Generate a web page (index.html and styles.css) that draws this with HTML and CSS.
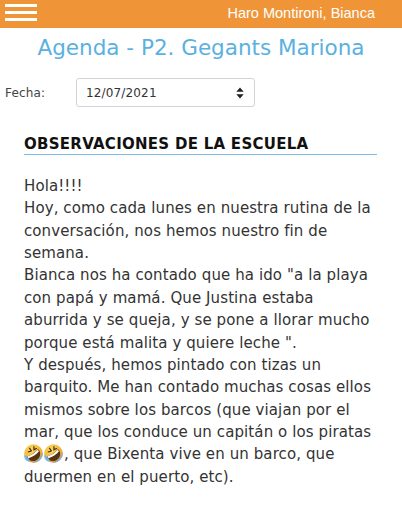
FILE: index.html
```html
<!DOCTYPE html>
<html lang="es">
<head>
<meta charset="utf-8">
<title>Agenda</title>
<link rel="stylesheet" href="styles.css">
</head>
<body>
<header class="topbar">
  <div class="burger"><span></span><span></span><span></span></div>
  <div class="user">Haro Montironi, Bianca</div>
</header>
<h1 class="title">Agenda - P2. Gegants Mariona</h1>
<div class="date-row">
  <label class="date-label">Fecha:</label>
  <div class="select">
    <span>12/07/2021</span>
    <svg class="updown" width="8" height="12" viewBox="0 0 8 12"><path d="M4 0.5 L7.7 4.8 H0.3 Z M4 11.5 L7.7 7.2 H0.3 Z" fill="#222"/></svg>
  </div>
</div>
<section class="obs">
  <h2 class="obs-title">OBSERVACIONES DE LA ESCUELA</h2>
  <p class="obs-text">Hola!!!!<br>Hoy, como cada lunes en nuestra rutina de la<br>conversación, nos hemos nuestro fin de<br>semana.<br>Bianca nos ha contado que ha ido "a la playa<br>con papá y mamá. Que Justina estaba<br>aburrida y se queja, y se pone a llorar mucho<br>porque está malita y quiere leche ".<br>Y después, hemos pintado con tizas un<br>barquito. Me han contado muchas cosas ellos<br>mismos sobre los barcos (que viajan por el<br>mar, que los conduce un capitán o los piratas<br><svg class="emoji" viewBox="0 0 18 18"><use href="#rofl"/></svg><svg class="emoji" viewBox="0 0 18 18"><use href="#rofl"/></svg>, que Bixenta vive en un barco, que<br>duermen en el puerto, etc).</p>
</section>
<svg class="defs" width="0" height="0">
  <defs>
    <radialGradient id="face" cx="40%" cy="30%" r="75%">
      <stop offset="0" stop-color="#fbdc5e"/>
      <stop offset=".65" stop-color="#f2b53a"/>
      <stop offset="1" stop-color="#d9862a"/>
    </radialGradient>
    <g id="rofl">
      <circle cx="9" cy="9" r="8.8" fill="url(#face)"/>
      <path d="M2.6 12.2 C6 11 11 8 13.2 4.8 C17.5 8.5 15 15 10 16 C6.5 16.6 3.8 15 2.6 12.2 Z" fill="#5a3312"/>
      <path d="M3.4 11.9 C7 10.6 10.8 8 13 5.4 L14.2 6.8 C12 9.6 8 12.2 4.2 13.5 Z" fill="#fff"/>
      <path d="M3.6 7.6 L7 6.8 M5 3.6 L7.2 6.8" stroke="#4a2b10" stroke-width="1.1" fill="none"/>
      <path d="M10.4 2.2 L10.4 5.4 L13.2 4" stroke="#4a2b10" stroke-width="1.1" fill="none" transform="translate(-1 0)"/>
      <path d="M0.4 10.5 C-0.2 13.6 1.6 16.4 4.6 16.8 C6 15.6 5 13.4 0.4 10.5 Z" fill="#74b6e6"/>
      <path d="M8 17.8 C11.5 18.2 15.8 16 17.4 11.4 C17.9 9.8 17.8 8.6 17.4 7.8 C16.5 12.4 13 16.4 8 17.8 Z" fill="#74b6e6"/>
    </g>
  </defs>
</svg>
</body>
</html>
```
FILE: styles.css
```css
* { box-sizing: border-box; }
html, body { margin: 0; padding: 0; }
body {
  width: 402px;
  height: 521px;
  overflow: hidden;
  background: #fff;
  font-family: "DejaVu Sans", Verdana, sans-serif;
  color: #222;
}
.topbar {
  height: 28px;
  background: #ef9538;
  display: flex;
  align-items: center;
  justify-content: space-between;
  padding: 0 27px 2px 5px;
}
.burger { width: 32px; display: flex; flex-direction: column; gap: 4px; margin-top: -1px; }
.burger span { display: block; height: 3px; background: #fff; }
.user { color: #fff; font-family: "Liberation Sans", Arial, sans-serif; font-size: 14.5px; }
.title {
  margin: 5px 0 0;
  text-align: center;
  font-size: 21.5px;
  font-weight: 400;
  line-height: 30px;
  color: #5ab1df;
}
.date-row { display: flex; align-items: center; margin-top: 15px; padding-left: 5px; }
.date-label { width: 71px; font-size: 12px; letter-spacing: .15px; color: #444; }
.select {
  width: 179px;
  height: 29px;
  border: 1px solid #d0d4d8;
  border-radius: 3px;
  display: flex;
  align-items: center;
  justify-content: space-between;
  padding: 0 10px 0 9px;
  font-size: 12px;
  letter-spacing: .15px;
  color: #333;
}
.obs { margin: 27px 25px 0 24px; }
.obs-title {
  margin: 0;
  font-size: 15px;
  font-weight: 700;
  letter-spacing: .27px;
  line-height: 20px;
  color: #111;
  border-bottom: 1px solid #7fbde6;
}
.obs-text {
  margin: 20px 0 0;
  font-size: 15px;
  letter-spacing: .1px;
  line-height: 22.36px;
  color: #333;
  white-space: nowrap;
}
.emoji { width: 19px; height: 19px; vertical-align: -4px; margin-right: 1px; }
.defs { position: absolute; }
```
